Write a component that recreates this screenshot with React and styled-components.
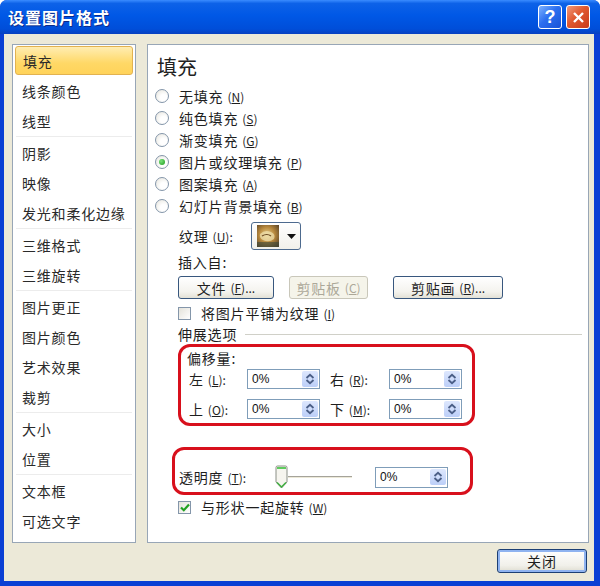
import React from 'react'
import styled, { createGlobalStyle } from 'styled-components'

const GlobalStyle = createGlobalStyle`
  html, body { margin: 0; padding: 0; background: #fff; }
  body { font-family: "Noto Sans CJK SC", "Liberation Sans", sans-serif; }
  * { box-sizing: border-box; }
`

const Window = styled.div`
  width: 600px;
  height: 586px;
  display: flex;
  flex-direction: column;
  background: #0A3FD4;
  border-radius: 7px 7px 0 0;
  overflow: hidden;
`

const TitleBar = styled.div`
  height: 34px;
  flex: none;
  display: flex;
  align-items: center;
  justify-content: space-between;
  padding: 0 10px 0 8px;
  background: linear-gradient(#3A8CFF 0%, #0D62E8 10%, #0058E6 45%, #004ED9 85%, #0840C0 100%);
`

const Title = styled.div`
  color: #fff;
  font-size: 16px;
  font-weight: 700;
  letter-spacing: 1px;
  text-shadow: 1px 1px 0 #0A2A8A;
`

const TitleButtons = styled.div`
  display: flex;
  gap: 4px;
`

const TitleButton = styled.div`
  width: 24px;
  height: 24px;
  border: 1px solid #fff;
  border-radius: 3px;
  display: flex;
  align-items: center;
  justify-content: center;
  color: #fff;
  font: bold 18px "Liberation Sans", sans-serif;
  background: ${p => p.$close
    ? 'linear-gradient(135deg, #F09A7C 0%, #E0582F 45%, #C8391A 100%)'
    : 'linear-gradient(135deg, #7DB2FF 0%, #2C6FF0 45%, #1A52D6 100%)'};
`

const Frame = styled.div`
  flex: 1;
  margin: 0 6px 5px 4px;
  background: #ECE9D8;
  display: flex;
  flex-direction: column;
  padding: 10px 5px 0 8px;
`

const Main = styled.div`
  height: 499px;
  display: flex;
  gap: 11px;
`

const Sidebar = styled.div`
  width: 124px;
  border: 1px solid #98A6B6;
  background: #fff;
  padding: 1px;
`

const NavItem = styled.div`
  height: ${p => (p.$active ? 29 : 30)}px;
  margin: ${p => (p.$active ? '0 1px 1px' : '0')};
  display: flex;
  align-items: center;
  padding-left: ${p => (p.$active ? 7 : 8)}px;
  font-size: 14px;
  letter-spacing: 0.8px;
  color: #2A2A2A;
  border-radius: 3px;
  border: ${p => (p.$active ? '1px solid #E2B250' : 'none')};
  background: ${p => (p.$active ? 'linear-gradient(#FFEDB2, #FFD866 60%, #FFD35A)' : 'transparent')};
`

const NavSep = styled.div`
  height: 2px;
  margin: 0 2px;
  border-top: 1px solid #ECECEC;
`

const Panel = styled.div`
  flex: 1;
  border: 1px solid #98A6B6;
  background: #fff;
  padding: 10px 0 0 7px;
  display: flex;
  flex-direction: column;
  font-size: 14px;
  letter-spacing: 0.8px;
  color: #1E1E1E;
`

const Heading = styled.div`
  font-size: 20px;
  line-height: 24px;
  margin-left: 2px;
  letter-spacing: 0;
  color: #222;
`

const RadioList = styled.div`
  margin-top: 6px;
  display: flex;
  flex-direction: column;
`

const Row = styled.div`
  height: ${p => p.$h || 22}px;
  margin-top: ${p => p.$mt || 0}px;
  display: flex;
  align-items: center;
  gap: ${p => p.$gap || 0}px;
`

const RadioCircle = styled.span`
  width: 14px;
  height: 14px;
  border-radius: 50%;
  border: 1px solid #8496AA;
  background: radial-gradient(circle at 65% 65%, #fff 30%, #E4E2DA 100%);
  display: flex;
  align-items: center;
  justify-content: center;
  margin-right: 10px;
  flex: none;
`

const RadioDot = styled.span`
  width: 6px;
  height: 6px;
  border-radius: 50%;
  background: radial-gradient(circle at 35% 35%, #7BE37B, #1E9A1E);
`

const Acc = styled.span`
  font-size: 12px;
  letter-spacing: 0;
  margin-left: 4px;
  u { text-decoration: underline; }
`

const Indent = styled.div`
  margin-left: 23px;
  display: flex;
  flex-direction: column;
`

const FieldLabel = styled.span`
  display: inline-block;
  flex: none;
  width: ${p => p.$w}px;
  padding-left: 1px;
`

const TextureButton = styled.div`
  width: 50px;
  height: 28px;
  border: 1px solid #4D6A8E;
  border-radius: 3px;
  background: linear-gradient(#FFFFFF, #F1F0EA);
  display: flex;
  align-items: center;
  padding-left: 5px;
  gap: 8px;
`

const Button = styled.div`
  width: ${p => p.$w}px;
  height: 23px;
  margin-left: ${p => p.$ml || 0}px;
  border: 1px solid ${p => (p.$disabled ? '#C9C7BA' : '#38577E')};
  border-radius: 3px;
  background: ${p => (p.$disabled ? '#F5F4EA' : 'linear-gradient(#FFFFFF, #F4F3EE 70%, #E3E1D6)')};
  color: ${p => (p.$disabled ? '#ACA899' : '#1E1E1E')};
  display: flex;
  align-items: center;
  justify-content: center;
  font-size: 14px;
`

const Check = styled.span`
  width: 13px;
  height: 13px;
  border: 1px solid #8496AA;
  background: linear-gradient(135deg, #E4E2DA, #fff);
  display: flex;
  align-items: center;
  justify-content: center;
  margin-right: 10px;
  flex: none;
`

const SectionTitle = styled.div`
  height: 18px;
  margin-top: 3px;
  display: flex;
  align-items: center;
  gap: 8px;
  &::after {
    content: '';
    flex: 1;
    height: 1px;
    background: #D0D0C8;
    margin-right: 6px;
  }
`

const Highlight = styled.div`
  width: ${p => p.$w}px;
  height: ${p => p.$h}px;
  margin-top: ${p => p.$mt}px;
  margin-left: ${p => p.$ml || 0}px;
  border: 3px solid #D8101C;
  border-radius: 12px;
  padding: ${p => p.$pad};
  display: flex;
  flex-direction: column;
`

const OffsetGrid = styled.div`
  display: grid;
  grid-template-columns: 58px 73px 10px 59px 73px;
  grid-auto-rows: 20px;
  row-gap: 10px;
  align-items: center;
  margin-top: 1px;
  padding-left: 2px;
`

const SpinBox = styled.div`
  width: ${p => p.$w || 73}px;
  height: ${p => p.$h || 20}px;
  border: 1px solid #7F9DB9;
  background: #fff;
  display: flex;
  align-items: center;
  justify-content: space-between;
  padding: 0 1px 0 4px;
  font: 12px "Liberation Sans", sans-serif;
  color: #111;
  letter-spacing: 0;
`

const SpinButton = styled.span`
  width: 16px;
  height: 16px;
  border-radius: 2px;
  background: linear-gradient(#DDE7FD, #BCCFF8);
  display: flex;
  align-items: center;
  justify-content: center;
`

const SliderWrap = styled.div`
  width: 77px;
  height: 24px;
  margin-right: 23px;
  display: flex;
  align-items: center;
  flex: none;
`

const Track = styled.div`
  flex: 1;
  height: 3px;
  border-top: 1px solid #A5A39A;
  border-bottom: 1px solid #fff;
  background: #ECE9D8;
`

const Footer = styled.div`
  display: flex;
  justify-content: flex-end;
  padding: 6px 2px 0 0;
`

const CloseButton = styled.div`
  width: 90px;
  height: 24px;
  border: 1px solid #1C3F73;
  border-radius: 3px;
  box-shadow: inset 0 0 0 2px #8FB3F0;
  background: linear-gradient(#FFFFFF, #F1F0EA 70%, #DEDCD0);
  display: flex;
  align-items: center;
  justify-content: center;
  font-size: 14px;
  letter-spacing: 1px;
  color: #1E1E1E;
`

const navGroups = [
  ['填充', '线条颜色', '线型'],
  ['阴影', '映像', '发光和柔化边缘'],
  ['三维格式', '三维旋转'],
  ['图片更正', '图片颜色', '艺术效果', '裁剪'],
  ['大小', '位置'],
  ['文本框', '可选文字'],
]

const fills = [
  ['无填充', 'N'],
  ['纯色填充', 'S'],
  ['渐变填充', 'G'],
  ['图片或纹理填充', 'P'],
  ['图案填充', 'A'],
  ['幻灯片背景填充', 'B'],
]

const Key = ({ k, tail }) => (
  <Acc>(<u>{k}</u>){tail}</Acc>
)

const SpinIcon = () => (
  <svg width="10" height="12" viewBox="0 0 10 12">
    <path d="M1.5 5 L5 1.8 L8.5 5" fill="none" stroke="#4A5E86" strokeWidth="1.8" />
    <path d="M1.5 7 L5 10.2 L8.5 7" fill="none" stroke="#4A5E86" strokeWidth="1.8" />
  </svg>
)

const Spin = ({ value = '0%', ...rest }) => (
  <SpinBox {...rest}>
    <span>{value}</span>
    <SpinButton><SpinIcon /></SpinButton>
  </SpinBox>
)

const CheckMark = () => (
  <svg width="10" height="9" viewBox="0 0 10 9">
    <path d="M1 4.5 L3.8 7.2 L9 1.5" fill="none" stroke="#21A121" strokeWidth="2.2" />
  </svg>
)

const TextureThumb = () => (
  <svg width="22" height="22" viewBox="0 0 22 22">
    <defs>
      <radialGradient id="tx" cx="45%" cy="45%" r="70%">
        <stop offset="0" stopColor="#E9D38F" />
        <stop offset="0.5" stopColor="#B8893E" />
        <stop offset="1" stopColor="#5A4326" />
      </radialGradient>
    </defs>
    <rect width="22" height="22" fill="url(#tx)" />
    <path d="M3 9 Q8 4 14 7 Q19 9 17 14 Q12 18 6 15 Q2 13 3 9Z" fill="#F1E2B0" opacity="0.7" />
    <path d="M5 11 Q10 8 14 11" fill="none" stroke="#6B4A22" strokeWidth="1.2" />
    <rect x="0" y="17" width="22" height="5" fill="#3E4A3A" opacity="0.6" />
  </svg>
)

const Thumb = () => (
  <svg width="13" height="24" viewBox="0 0 13 24">
    <path d="M1 2.5 Q1 1 2.5 1 L10.5 1 Q12 1 12 2.5 L12 17 L6.5 23 L1 17Z" fill="#F6F5EF" stroke="#8A8F86" />
    <path d="M2 2 L11 2 L11 4 L2 4Z" fill="#5FCB5F" />
    <path d="M2 17.5 L6.5 22 L11 17.5" fill="none" stroke="#3FAF3F" strokeWidth="1.5" />
  </svg>
)

export default function App() {
  return (
    <>
      <GlobalStyle />
      <Window>
        <TitleBar>
          <Title>设置图片格式</Title>
          <TitleButtons>
            <TitleButton>?</TitleButton>
            <TitleButton $close>
              <svg width="13" height="13" viewBox="0 0 13 13">
                <path d="M2 2 L11 11 M11 2 L2 11" stroke="#fff" strokeWidth="2.4" />
              </svg>
            </TitleButton>
          </TitleButtons>
        </TitleBar>
        <Frame>
          <Main>
            <Sidebar>
              {navGroups.map((g, gi) => (
                <React.Fragment key={gi}>
                  {gi > 0 && <NavSep />}
                  {g.map(item => (
                    <NavItem key={item} $active={item === '填充'}>{item}</NavItem>
                  ))}
                </React.Fragment>
              ))}
            </Sidebar>
            <Panel>
              <Heading>填充</Heading>
              <RadioList>
                {fills.map(([label, k]) => (
                  <Row key={k}>
                    <RadioCircle>{k === 'P' && <RadioDot />}</RadioCircle>
                    {label}<Key k={k} />
                  </Row>
                ))}
              </RadioList>
              <Indent>
                <Row $h={28} $mt={5}>
                  <FieldLabel $w={73}>纹理<Key k="U" tail=":" /></FieldLabel>
                  <TextureButton>
                    <TextureThumb />
                    <svg width="9" height="5" viewBox="0 0 9 5"><path d="M0 0 L9 0 L4.5 5Z" fill="#111" /></svg>
                  </TextureButton>
                </Row>
                <Row $h={20} $mt={2}>插入自:</Row>
                <Row $h={23} $mt={4}>
                  <Button $w={96}>文件<Key k="F" tail="..." /></Button>
                  <Button $w={79} $ml={15} $disabled>剪贴板<Key k="C" /></Button>
                  <Button $w={110} $ml={25}>剪贴画<Key k="R" tail="..." /></Button>
                </Row>
                <Row $h={18} $mt={5}>
                  <Check />将图片平铺为纹理<Key k="I" />
                </Row>
                <SectionTitle>伸展选项</SectionTitle>
                <Highlight $w={297} $h={82} $mt={1} $pad="1px 0 0 6px">
                  <Row $h={20}>偏移量:</Row>
                  <OffsetGrid>
                    <span>左<Key k="L" tail=":" /></span>
                    <Spin />
                    <span />
                    <span>右<Key k="R" tail=":" /></span>
                    <Spin />
                    <span>上<Key k="O" tail=":" /></span>
                    <Spin />
                    <span />
                    <span>下<Key k="M" tail=":" /></span>
                    <Spin />
                  </OffsetGrid>
                </Highlight>
                <Highlight $w={301} $h={48} $mt={21} $ml={-6} $pad="15px 0 0 3px">
                  <Row $h={24}>
                    <FieldLabel $w={97}>透明度<Key k="T" tail=":" /></FieldLabel>
                    <SliderWrap>
                      <Thumb />
                      <Track />
                    </SliderWrap>
                    <Spin $h={21} />
                  </Row>
                </Highlight>
                <Row $h={18} $mt={3}>
                  <Check><CheckMark /></Check>与形状一起旋转<Key k="W" />
                </Row>
              </Indent>
            </Panel>
          </Main>
          <Footer>
            <CloseButton>关闭</CloseButton>
          </Footer>
        </Frame>
      </Window>
    </>
  )
}
